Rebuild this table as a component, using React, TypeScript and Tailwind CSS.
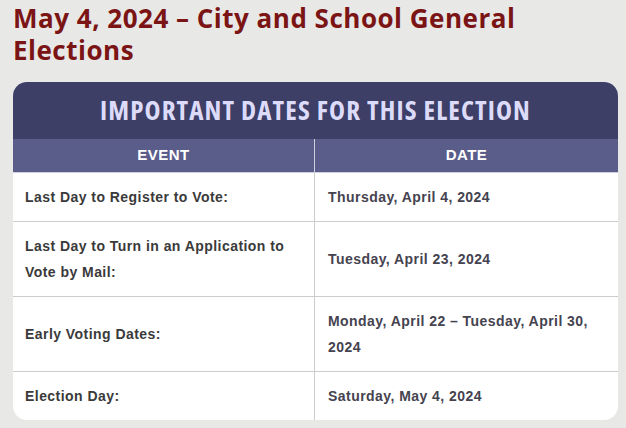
import React from "react";

const rows = [
  { event: "Last Day to Register to Vote:", date: "Thursday, April 4, 2024" },
  {
    event: "Last Day to Turn in an Application to Vote by Mail:",
    date: "Tuesday, April 23, 2024",
  },
  {
    event: "Early Voting Dates:",
    date: "Monday, April 22 – Tuesday, April 30, 2024",
  },
  { event: "Election Day:", date: "Saturday, May 4, 2024" },
];

const App = () => {
  return (
    <div className="min-h-[428px] w-[626px] bg-[#e8e8e7] px-[13px] pt-[2px] pb-[9px]">
      <h1 className="font-['Open_Sans',sans-serif] text-[26px] font-bold leading-[32px] tracking-[0.5px] text-[#7b1414]">
        May 4, 2024 – City and School General Elections
      </h1>
      <div className="mt-[16px] w-[605px] overflow-hidden rounded-[14px] bg-white font-['Liberation_Sans',Arial,sans-serif]">
        <div className="flex h-[57px] items-center justify-center bg-[#3d3f66]">
          <h2 className="font-['Open_Sans',sans-serif] text-[27px] font-bold tracking-[1.1px] text-[#dcdcfa] [font-stretch:semi-condensed]">
            IMPORTANT DATES FOR THIS ELECTION
          </h2>
        </div>
        <div className="grid grid-cols-[302px_1fr] border-b border-[#cfd0dc] bg-[#5a5c8a] text-[15px] font-bold tracking-[0.5px] text-white">
          <div className="flex h-[33px] items-center justify-center border-r border-[#cfd0dc]">
            EVENT
          </div>
          <div className="flex h-[33px] items-center justify-center">DATE</div>
        </div>
        {rows.map((row, i) => (
          <div
            key={row.event}
            className={
              "grid grid-cols-[302px_1fr] text-[14px] font-bold leading-[26px] tracking-[0.45px] " +
              (i < rows.length - 1 ? "border-b border-[#cccccc]" : "")
            }
          >
            <div className="flex items-center border-r border-[#cccccc] py-[11px] pl-[12px] pr-[16px] text-[#3a3a3a]">
              {row.event}
            </div>
            <div className="flex items-center py-[11px] pl-[13px] pr-[16px] text-[#45434f]">
              {row.date}
            </div>
          </div>
        ))}
      </div>
    </div>
  );
};

export default App;
